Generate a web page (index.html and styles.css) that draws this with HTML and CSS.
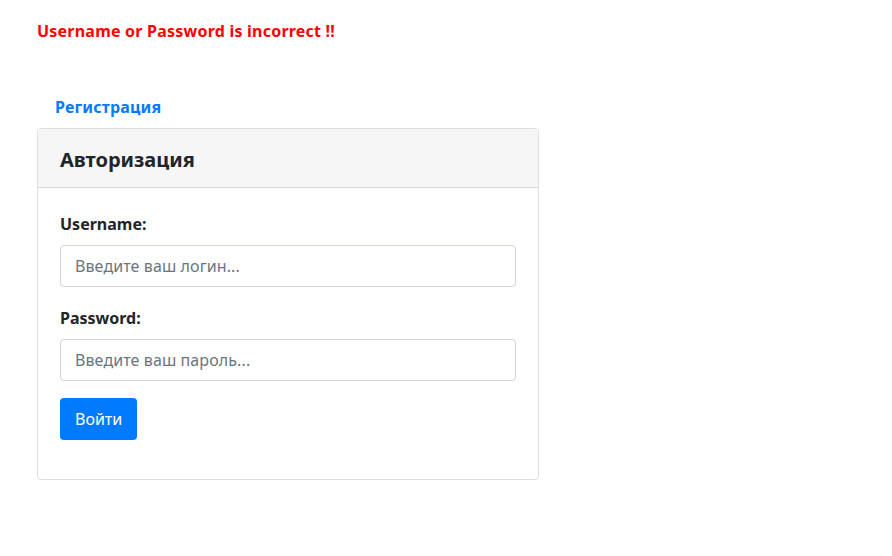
FILE: index.html
```html
<!DOCTYPE html>
<html lang="ru">
<head>
<meta charset="utf-8">
<title>Авторизация</title>
<link rel="stylesheet" href="styles.css">
</head>
<body>
<div class="page">
  <p class="error">Username or Password is incorrect !!</p>
  <a class="reg-link" href="#">Регистрация</a>
  <div class="card">
    <div class="card-header">Авторизация</div>
    <form class="card-body">
      <div class="field">
        <label class="label" for="u">Username:</label>
        <input class="input" id="u" type="text" placeholder="Введите ваш логин...">
      </div>
      <div class="field">
        <label class="label" for="p">Password:</label>
        <input class="input" id="p" type="password" placeholder="Введите ваш пароль...">
      </div>
      <button class="btn" type="button">Войти</button>
    </form>
  </div>
</div>
</body>
</html>
```
FILE: styles.css
```css
* { box-sizing: border-box; }
html, body { margin: 0; padding: 0; background: #fff; }
body {
  font-family: "Noto Sans", "Open Sans", sans-serif;
  font-size: 16px;
  color: #212529;
}
.page {
  padding: 19px 0 0 37px;
  display: flex;
  flex-direction: column;
  align-items: flex-start;
}
.error {
  margin: 0;
  color: #ff0000;
  font-weight: 700;
  font-size: 16px;
  line-height: 24px;
  letter-spacing: 0.22px;
  font-variant-ligatures: none;
  font-feature-settings: "liga" 0, "dlig" 0, "calt" 0;
}
.reg-link {
  margin: 52px 0 0 18px;
  color: #007bff;
  font-weight: 700;
  text-decoration: none;
  line-height: 24px;
  letter-spacing: 0.15px;
}
.card {
  margin-top: 9px;
  width: 502px;
  border: 1px solid rgba(0,0,0,.125);
  border-radius: 4px;
  overflow: hidden;
}
.card-header {
  background: #f6f6f6;
  border-bottom: 1px solid rgba(0,0,0,.125);
  padding: 18px 22px 14px;
  font-size: 20px;
  font-weight: 700;
  line-height: 26px;
  color: #212529;
}
.card-body {
  padding: 24px 22px 39px;
  display: flex;
  flex-direction: column;
  align-items: flex-start;
}
.field {
  width: 100%;
  display: flex;
  flex-direction: column;
  margin-bottom: 19px;
}
.field:last-of-type { margin-bottom: 16px; }
.label {
  font-weight: 700;
  line-height: 24px;
  margin-bottom: 9px;
}
.input {
  width: 100%;
  height: 42px;
  padding: 0 14px;
  border: 1px solid #ced4da;
  border-radius: 4px;
  font-family: inherit;
  font-size: 16px;
  color: #495057;
}
.input::placeholder { color: #6c757d; letter-spacing: 0.1px; }
.btn {
  margin-top: 1px;
  height: 42px;
  padding: 0 15px;
  background: #007bff;
  color: #fff;
  border: none;
  border-radius: 4px;
  font-family: inherit;
  font-size: 16px;
}
```
